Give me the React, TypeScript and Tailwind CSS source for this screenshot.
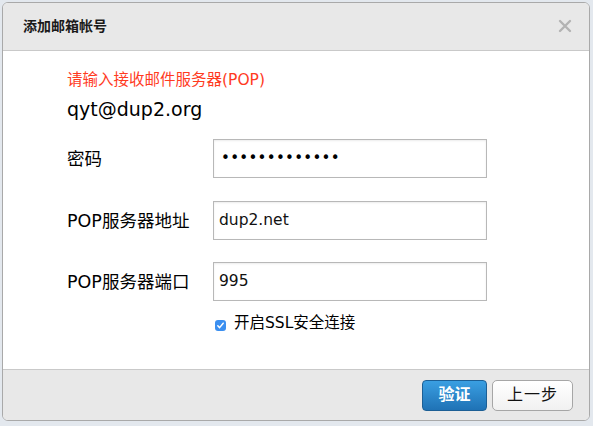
import React from "react";

const font = {
  fontFamily: '"DejaVu Sans", "Noto Sans CJK SC", sans-serif',
};

// Form row: label on the left, input on the right
const FieldRow = ({
  label,
  value,
  className,
}: {
  label: string;
  value: React.ReactNode;
  className?: string;
}) => (
  <div className={`flex items-center ${className ?? ""}`}>
    <div className="w-[146px] text-[17.5px] text-black leading-6">{label}</div>
    <div className="w-[274px] h-[39px] border border-[#b8b8b8] bg-white shadow-[inset_0_1px_2px_rgba(0,0,0,0.08)] flex items-center pl-[5px] text-[15.5px] text-[#111]">
      {value}
    </div>
  </div>
);

export default function App() {
  return (
    <div
      className="w-[593px] h-[426px] bg-[#e3e8ee] pt-[2px] pl-[2px] overflow-hidden"
      style={font}
    >
      <div className="w-[588px] h-[419px] rounded-[6px] border border-[#a9a9a9] bg-white overflow-hidden flex flex-col">
        {/* Header */}
        <div className="h-[48px] bg-[#e8e8e8] border-b border-[#c9c9c9] flex items-center justify-between pl-[20px] pr-[17px] shrink-0">
          <span className="text-[14px] font-bold text-[#1a1a1a]">添加邮箱帐号</span>
          <svg width="14" height="14" viewBox="0 0 14 14" className="mb-[2px]">
            <path
              d="M2 2 L12 12 M12 2 L2 12"
              stroke="#b3b3b3"
              strokeWidth="2.4"
              strokeLinecap="round"
            />
          </svg>
        </div>

        {/* Body */}
        <div className="flex-1 pl-[64px] pt-[19px]">
          <div className="text-[15.5px] leading-5 text-[#ff3b1f]">
            请输入接收邮件服务器(POP)
          </div>
          <div className="text-[19px] leading-6 text-black mt-[7px]">qyt@dup2.org</div>

          <FieldRow
            className="mt-[18px]"
            label="密码"
            value={
              <span className="text-[15px] tracking-[0.3px] text-black pl-[2px]">
                •••••••••••••
              </span>
            }
          />
          <FieldRow className="mt-[23px]" label="POP服务器地址" value="dup2.net" />
          <FieldRow className="mt-[22px]" label="POP服务器端口" value="995" />

          <div className="flex items-center mt-[12px] ml-[148px]">
            <span className="w-[11px] h-[11px] rounded-[3px] bg-[#3b8ff0] flex items-center justify-center translate-y-[2px]">
              <svg width="9" height="9" viewBox="0 0 9 9">
                <path
                  d="M1.8 4.8 L3.6 6.6 L7.2 2.2"
                  stroke="white"
                  strokeWidth="1.5"
                  fill="none"
                  strokeLinecap="round"
                  strokeLinejoin="round"
                />
              </svg>
            </span>
            <span className="ml-[8px] text-[15.5px] leading-5 text-black">开启SSL安全连接</span>
          </div>
        </div>

        {/* Footer */}
        <div className="h-[51px] bg-[#e8e8e8] border-t border-[#c9c9c9] flex items-center justify-end gap-[5px] pr-[16px] shrink-0">
          <button className="w-[65px] h-[31px] rounded-[4px] border border-[#1c5f95] bg-gradient-to-b from-[#3a9fe2] to-[#1f72b5] text-white text-[16px] font-bold">
            验证
          </button>
          <button className="w-[81px] h-[31px] rounded-[5px] border border-[#a6a6a6] bg-gradient-to-b from-white to-[#f1f1f1] text-[#111] text-[16px] tracking-[1px]">
            上一步
          </button>
        </div>
      </div>
    </div>
  );
}
